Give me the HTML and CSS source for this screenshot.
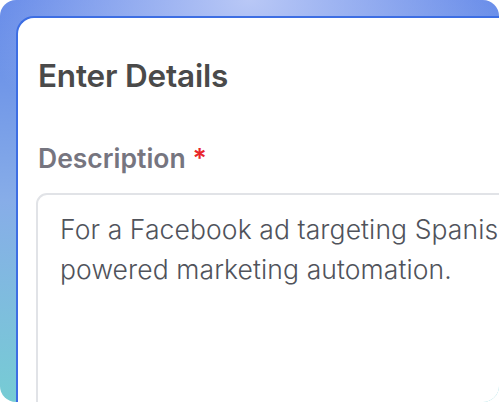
FILE: index.html
```html
<!DOCTYPE html>
<html lang="en">
<head>
<meta charset="utf-8">
<title>Enter Details</title>
<link rel="stylesheet" href="styles.css">
</head>
<body>
<div class="frame">
  <section class="card">
    <h1 class="title">Enter Details</h1>
    <label class="label" for="desc">Description <span class="req">*</span></label>
    <div class="field" id="desc">For a Facebook ad targeting Spanish-speaking small business owners, promoting AI-<br>powered marketing automation.</div>
  </section>
</div>
</body>
</html>
```
FILE: styles.css
```css
html, body {
  margin: 0;
  padding: 0;
  background: #ffffff;
}
.frame {
  width: 499px;
  height: 402px;
  box-sizing: border-box;
  border-radius: 16px;
  overflow: hidden;
  padding: 16px 0 0 16px;
  background:
    radial-gradient(ellipse 55% 45% at 50% 0%, rgba(185, 200, 246, 1) 0%, rgba(185, 200, 246, 0) 100%),
    linear-gradient(180deg, #6187e8 0%, #87ade8 50%, #76ccd4 100%);
  font-family: Inter, "Noto Sans", sans-serif;
}
.card {
  width: 1400px;
  height: 520px;
  box-sizing: border-box;
  background: #ffffff;
  border-top: 2px solid #3d6ee3;
  border-left: 2px solid #3d6ee3;
  border-top-left-radius: 18px;
  padding: 39px 0 0 20px;
}
.title {
  margin: 0;
  font-size: 31.5px;
  font-weight: 600;
  line-height: 38px;
  color: #4a4a4a;
  letter-spacing: -0.2px;
}
.label {
  display: block;
  margin-top: 47px;
  font-size: 26.5px;
  font-weight: 600;
  line-height: 32px;
  color: #76757f;
}
.req {
  color: #e8262a;
}
.field {
  margin-top: 19px;
  margin-left: -2px;
  box-sizing: border-box;
  height: 400px;
  border: 2px solid #e1e3e7;
  border-radius: 11px;
  padding: 14px 22px;
  font-size: 26.5px;
  line-height: 40px;
  color: #50535b;
  font-weight: 350;
  letter-spacing: 0.1px;
  white-space: nowrap;
}
```
